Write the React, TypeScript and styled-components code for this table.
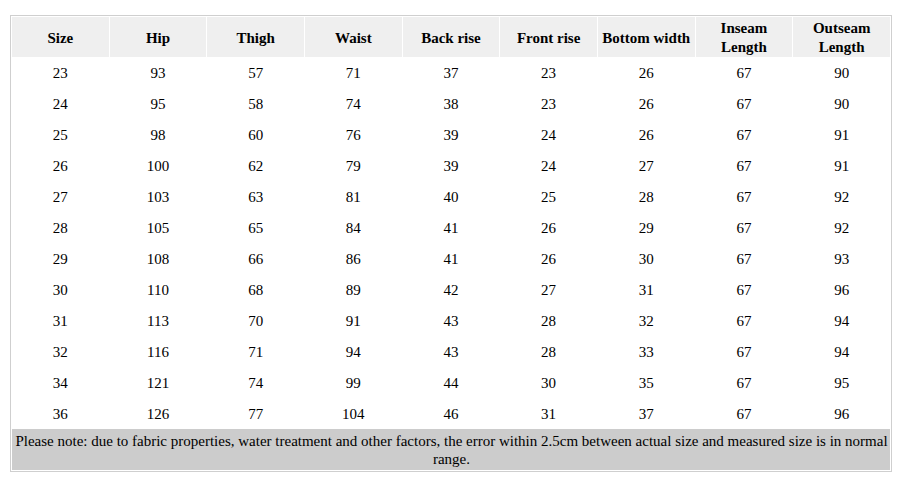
import React from "react";
import styled, { createGlobalStyle } from "styled-components";

const Global = createGlobalStyle`
  html, body { margin: 0; padding: 0; background: #fff; }
  body { font-family: "Liberation Serif", "Times New Roman", serif; color: #000; }
`;

const Page = styled.div`
  padding: 15px 8px 0 10px;
`;

const Frame = styled.div`
  width: 878px;
  border: 1px solid #cfcfcf;
  padding: 1px;
`;

const Table = styled.table`
  table-layout: fixed;
  border-collapse: separate;
  border-spacing: 1px 0;
  margin: 0 -1px;
  width: calc(100% + 2px);
`;

const HeadCell = styled.th`
  background: #efefef;
  height: 38px;
  padding: 2px 2px 0;
  font-size: 15px;
  font-weight: bold;
  line-height: 19px;
  text-align: center;
  vertical-align: middle;
  white-space: nowrap;
`;

const Cell = styled.td`
  height: 29px;
  padding: 2px 0 0;
  font-size: 15px;
  text-align: center;
  vertical-align: middle;
`;

const NoteCell = styled.td`
  background: #cccccc;
  height: 38px;
  padding: 3px 2px 0 3px;
  font-size: 15px;
  line-height: 18px;
  text-align: center;
  vertical-align: top;
`;

const headers: React.ReactNode[] = [
  "Size",
  "Hip",
  "Thigh",
  "Waist",
  "Back rise",
  "Front rise",
  "Bottom width",
  <>Inseam<br />Length</>,
  <>Outseam<br />Length</>,
];

const rows: number[][] = [
  [23, 93, 57, 71, 37, 23, 26, 67, 90],
  [24, 95, 58, 74, 38, 23, 26, 67, 90],
  [25, 98, 60, 76, 39, 24, 26, 67, 91],
  [26, 100, 62, 79, 39, 24, 27, 67, 91],
  [27, 103, 63, 81, 40, 25, 28, 67, 92],
  [28, 105, 65, 84, 41, 26, 29, 67, 92],
  [29, 108, 66, 86, 41, 26, 30, 67, 93],
  [30, 110, 68, 89, 42, 27, 31, 67, 96],
  [31, 113, 70, 91, 43, 28, 32, 67, 94],
  [32, 116, 71, 94, 43, 28, 33, 67, 94],
  [34, 121, 74, 99, 44, 30, 35, 67, 95],
  [36, 126, 77, 104, 46, 31, 37, 67, 96],
];

export default function App() {
  return (
    <>
      <Global />
      <Page>
        <Frame>
          <Table>
            <thead>
              <tr>
                {headers.map((h, i) => (
                  <HeadCell key={i}>{h}</HeadCell>
                ))}
              </tr>
            </thead>
            <tbody>
              {rows.map((r, i) => (
                <tr key={i}>
                  {r.map((v, j) => (
                    <Cell key={j}>{v}</Cell>
                  ))}
                </tr>
              ))}
              <tr>
                <NoteCell colSpan={9}>
                  Please note: due to fabric properties, water treatment and other factors, the error within 2.5cm between actual size and measured size is in normal range.
                </NoteCell>
              </tr>
            </tbody>
          </Table>
        </Frame>
      </Page>
    </>
  );
}
